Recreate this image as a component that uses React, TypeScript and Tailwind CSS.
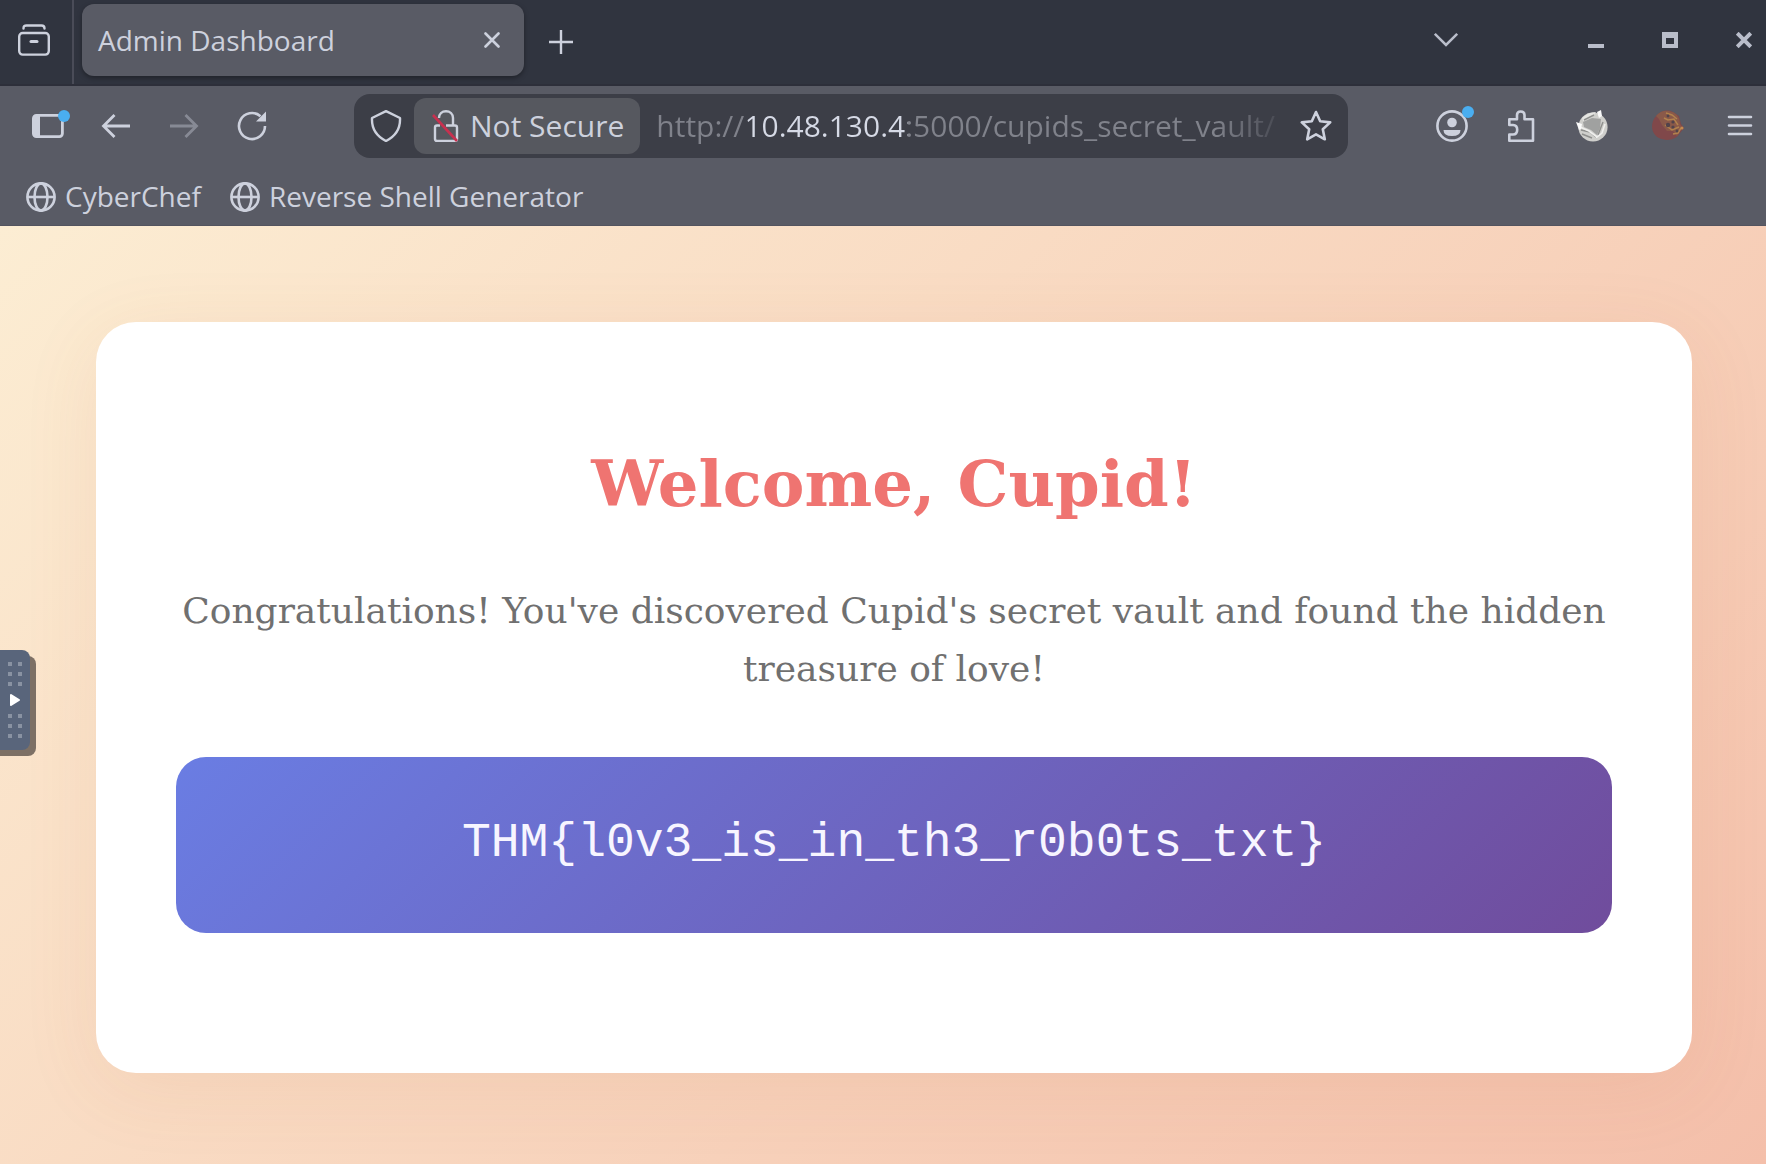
import React from 'react';

interface BookmarkProps {
    label: string;
    href: string;
}

interface IconButtonProps {
    label: string;
    className?: string;
    children: React.ReactNode;
}

const bookmarks: BookmarkProps[] = [
    { label: 'CyberChef', href: '#cyberchef' },
    { label: 'Reverse Shell Generator', href: '#reverse-shell-generator' },
];

const IconButton = ({ label, className = '', children }: IconButtonProps) => (
    <button type="button" aria-label={label} className={`relative shrink-0 ${className}`}>
        {children}
    </button>
);

const NotificationDot = () => (
    <span className="absolute -right-1.5 -top-1 size-3 rounded-full bg-[#4aaef0]" />
);

const GlobeIcon = () => (
    <svg className="size-8 shrink-0" viewBox="0 0 32 32" fill="none" stroke="currentColor" strokeWidth="2.6">
        <circle cx="16" cy="17" r="13.6" />
        <ellipse cx="16" cy="17" rx="6.5" ry="13.6" />
        <path d="M2.4 17h27.2" />
    </svg>
);

const Bookmark = ({ label, href }: BookmarkProps) => (
    <a href={href} className="flex items-center gap-2">
        <GlobeIcon />
        <span>{label}</span>
    </a>
);

const TabBar = () => (
    <div className="flex h-[86px] items-center border-b-2 border-[#2d2f3a] bg-[#30343f] pl-[18px] pr-3.5">
        <IconButton label="Recent browsing" className="mb-1 size-8">
            <svg className="size-8" viewBox="0 0 32 32" fill="none" stroke="currentColor" strokeWidth="2.4" strokeLinecap="round">
                <path d="M5.5 4.5Q5.5 1.5 8.5 1.5h15q3 0 3 3" />
                <rect x="1.2" y="9" width="29.6" height="21.6" rx="3.5" />
                <path d="M13 17.5h6" strokeWidth="3" />
            </svg>
        </IconButton>
        <div className="ml-[22px] h-full w-0.5 bg-[#4a4c58]" />
        <div className="mb-1 ml-2 flex h-18 w-[442px] items-center justify-between rounded-xl bg-[#595b65] pl-4 pr-6 shadow-[0_2px_5px_rgba(0,0,0,0.35)]">
            <span>Admin Dashboard</span>
            <IconButton label="Close tab">
                <svg className="size-4" viewBox="0 0 16 16" fill="none" stroke="currentColor" strokeWidth="2.6" strokeLinecap="round">
                    <path d="M1.5 1.5l13 13M14.5 1.5l-13 13" />
                </svg>
            </IconButton>
        </div>
        <IconButton label="New tab" className="ml-[25px]">
            <svg className="size-6" viewBox="0 0 24 24" fill="none" stroke="currentColor" strokeWidth="2.4">
                <path d="M12 0v24M0 12h24" />
            </svg>
        </IconButton>
        <div className="ml-auto flex items-center gap-[58px] pb-1 text-[#b9bdca]">
            <IconButton label="List all tabs" className="mr-18">
                <svg className="h-4 w-6" viewBox="0 0 24 16" fill="none" stroke="currentColor" strokeWidth="2.6">
                    <path d="M.8 1.8L12 13 23.2 1.8" />
                </svg>
            </IconButton>
            <IconButton label="Minimize">
                <svg className="size-4" viewBox="0 0 16 16" fill="currentColor">
                    <path d="M0 12h16v4H0z" />
                </svg>
            </IconButton>
            <IconButton label="Maximize">
                <svg className="size-4" viewBox="0 0 16 16" fill="none" stroke="currentColor" strokeWidth="4">
                    <path d="M2 2h12v12H2z" />
                    <path d="M2 4h12" />
                </svg>
            </IconButton>
            <IconButton label="Close window">
                <svg className="size-4" viewBox="0 0 16 16" fill="none" stroke="currentColor" strokeWidth="4">
                    <path d="M1.2 1.2l13.6 13.6M14.8 1.2L1.2 14.8" />
                </svg>
            </IconButton>
        </div>
    </div>
);

const AddressBar = () => (
    <div className="ml-[86px] flex h-16 min-w-0 flex-1 items-center rounded-2xl bg-[#3c3e47] px-4 text-[30px]">
        <IconButton label="Tracking protection">
            <svg className="size-8" viewBox="0 0 32 32" fill="none" stroke="currentColor" strokeWidth="2.4" strokeLinejoin="round">
                <path d="M16 1.2L30 8c.5 10-4 18-14 23C6 26 1.5 18 2 8z" />
            </svg>
        </IconButton>
        <button type="button" className="ml-3 flex h-14 shrink-0 items-center gap-2 rounded-xl bg-[#56585f] px-4">
            <svg className="size-8" viewBox="0 0 32 32" fill="none" stroke="currentColor" strokeWidth="2.4" strokeLinejoin="round">
                <path d="M9 8C9 4 12 1.2 16 1.2S23 4 23 8v7" />
                <path d="M16 15.5h9q2 0 2 2V29q0 2-2 2H7q-2 0-2-2V17.5q0-2 2-2h3" />
                <path d="M3 5l24 26" stroke="#c8304f" strokeWidth="2.6" />
            </svg>
            <span>Not Secure</span>
        </button>
        {/* the gradient dims everything but the host and fades out the overflowing end */}
        <input
            type="text"
            aria-label="Address"
            defaultValue="http://10.48.130.4:5000/cupids_secret_vault/"
            className="ml-4 min-w-0 flex-1 bg-[linear-gradient(90deg,#80828b_92px,#d6dae6_92px,#d6dae6_252px,#80828b_252px,#80828b_560px,#3c3e47_636px)] bg-clip-text text-transparent outline-none"
        />
        <IconButton label="Bookmark this page" className="ml-3">
            <svg className="size-8" viewBox="0 0 32 32" fill="none" stroke="currentColor" strokeWidth="2.6" strokeLinejoin="round">
                <path d="M16 2l4.2 9.2 10 1.2-7.4 6.9 2 10L16 24.4 7.2 29.3l2-10L1.8 12.4l10-1.2z" />
            </svg>
        </IconButton>
    </div>
);

const NavBar = () => (
    <div className="flex h-20 items-center pl-8 pr-2.5">
        <div className="flex items-center gap-9">
            <IconButton label="Show sidebar" className="h-6 w-8">
                <svg className="h-6 w-8" viewBox="0 0 32 24" fill="none" stroke="currentColor" strokeWidth="2.8">
                    <rect x="1.4" y="1.4" width="29" height="21.2" rx="3" />
                    <path d="M2 2h6v20H2z" fill="currentColor" stroke="none" />
                </svg>
                <NotificationDot />
            </IconButton>
            <IconButton label="Back">
                <svg className="size-8" viewBox="0 0 32 32" fill="none" stroke="currentColor" strokeWidth="2.8">
                    <path d="M14.5 5L3.5 16l11 11M3.500 16H30" />
                </svg>
            </IconButton>
            <IconButton label="Forward" className="opacity-40">
                <svg className="size-8" viewBox="0 0 32 32" fill="none" stroke="currentColor" strokeWidth="2.8">
                    <path d="M17.5 5L28.5 16l-11 11M28.500 16H2" />
                </svg>
            </IconButton>
            <IconButton label="Reload">
                <svg className="size-8" viewBox="0 0 32 32" fill="none" stroke="currentColor" strokeWidth="2.6">
                    <path d="M29 16a13 13 0 1 1-4.500-9.800" />
                    <path d="M30 1.5v10H20z" fill="currentColor" stroke="none" />
                </svg>
            </IconButton>
        </div>
        <AddressBar />
        <div className="ml-[88px] flex items-center gap-10">
            <IconButton label="Account" className="size-8">
                <svg className="size-8" viewBox="0 0 32 32" fill="currentColor">
                    <circle cx="16" cy="16" r="14.6" fill="none" stroke="currentColor" strokeWidth="2.6" />
                    <circle cx="16" cy="12.5" r="4.8" />
                    <path d="M7.5 20h17q0 6-8.5 6t-8.5-6z" />
                </svg>
                <NotificationDot />
            </IconButton>
            <IconButton label="Extensions">
                <svg className="h-8 w-7" viewBox="0 0 28 32" fill="none" stroke="currentColor" strokeWidth="2.6" strokeLinejoin="round">
                    <path d="M1.3 15V9.3H9V5q0-3.5 3.7-3.5T16.5 5v4.3H25V30.7H1.3V24.5H5q4.2 0 4.2-4.7T5 15z" />
                </svg>
            </IconButton>
            <IconButton label="Fox extension">
                <svg className="size-8" viewBox="0 0 32 32">
                    <circle cx="17" cy="17" r="14.6" fill="#cfcfcc" />
                    <path d="M6 8Q12 2 20 2l-4 5-9 4z" fill="#e6e6e3" />
                    <path d="M7 12l9-4 9 1-1 9-3 7-6-5-7-3z" fill="#a0a1a0" />
                    <path d="M5 20l9 2 7 6M8 10l10-5M27 12l-5 13M6 24l10 4" fill="none" stroke="#8f908e" strokeWidth="1.4" />
                    <path d="M4 17l9 4 8 6M29 14l-3 9-6 5" fill="none" stroke="#f0f0ee" strokeWidth="1.6" />
                    <path d="M0 12l6 2-1 5-2 1zM21 2l4-2 1 6-3 2z" fill="#fafafa" />
                </svg>
            </IconButton>
            <IconButton label="Cookie extension" className="ml-1">
                <svg className="size-8" viewBox="0 0 32 32">
                    <path d="M5 5q8-7 16-3l6 4 2 8 3 4-4 5q-4 7-13 7Q1 29 0 17 0 10 5 5z" fill="#80484a" />
                    <path d="M4 6Q9 0 17 1q11 2 11 13l2 4-5 8-4-5-6 0-5-6-3-6z" fill="#8a5949" />
                    <path d="M14 3l6 2 5 4M12 8l4 2 6-1 4 6M13 15l7 5 7-3M21 24l5-1 3-5" fill="none" stroke="#b2824d" strokeWidth="1.5" />
                    <g fill="#51434b">
                        <circle cx="16" cy="6" r="1.4" />
                        <circle cx="21" cy="12" r="1.6" />
                        <circle cx="16" cy="15" r="2.2" />
                        <circle cx="21" cy="17" r="1.6" />
                        <circle cx="25" cy="21" r="1.4" />
                    </g>
                    <circle cx="30" cy="18" r="1.5" fill="#c38b50" />
                </svg>
            </IconButton>
            <IconButton label="Open menu">
                <svg className="size-8" viewBox="0 0 32 32" fill="none" stroke="currentColor" strokeWidth="2.6" strokeLinecap="round">
                    <path d="M5 7h22M5 15.5h22M5 24h22" />
                </svg>
            </IconButton>
        </div>
    </div>
);

const BookmarksBar = () => (
    <nav aria-label="Bookmarks" className="flex h-15 items-center gap-7 border-b border-[#53545f] pl-[25px]">
        {bookmarks.map((bookmark) => (
            <Bookmark key={bookmark.label} {...bookmark} />
        ))}
    </nav>
);

const SideHandle = () => (
    <button
        type="button"
        aria-label="Open side panel"
        className="absolute left-0 top-[424px] h-[100px] w-[30px] rounded-r-lg bg-[#59657b] shadow-[6px_6px_0_#7d7065,0_6px_0_#7d7065]"
    >
        <svg className="h-[100px] w-[30px]" viewBox="0 0 30 100" fill="#8992a2">
            {[12, 22, 32, 64, 74, 84].map((y) => (
                <path key={y} d={`M8 ${y}h4v4h-4zM18 ${y}h4v4h-4z`} />
            ))}
            <path d="M11 45l8 5-8 5z" fill="#fff" stroke="#fff" strokeWidth="2" strokeLinejoin="round" />
        </svg>
    </button>
);

const App = () => (
    <div className="flex min-h-screen flex-col overflow-hidden font-['Open_Sans','Noto_Sans',sans-serif] text-[28px] leading-9 text-[#cdd1dd]">
        <header className="bg-[#595b65]">
            <TabBar />
            <NavBar />
            <BookmarksBar />
        </header>
        <main className="relative flex-1 bg-[linear-gradient(135deg,#fcedd3,#f4bfaa)] pb-[90px] pl-24 pr-[74px] pt-24">
            <section className="rounded-[40px] bg-white px-20 pb-[140px] pt-[122px] text-center shadow-[0_16px_80px_rgba(190,100,60,0.09)]">
                <h1 className="font-['DejaVu_Serif',serif] text-[64px] font-bold leading-[80px] text-[#ef7471]">
                    Welcome, Cupid!
                </h1>
                <p className="mt-[58px] font-['DejaVu_Serif',serif] text-[36px] leading-[58px] text-[#707070]">
                    Congratulations! You've discovered Cupid's secret vault and found the hidden treasure of love!
                </p>
                <div className="mt-[59px] flex h-44 items-center justify-center rounded-[30px] bg-[linear-gradient(135deg,#6a7de3,#704c9c)] pb-1">
                    <code className="font-['Liberation_Mono',monospace] text-[48px] leading-[56px] text-[#f7f5ff]">
                        {'THM{l0v3_is_in_th3_r0b0ts_txt}'}
                    </code>
                </div>
            </section>
            <SideHandle />
        </main>
    </div>
);

export default App;
